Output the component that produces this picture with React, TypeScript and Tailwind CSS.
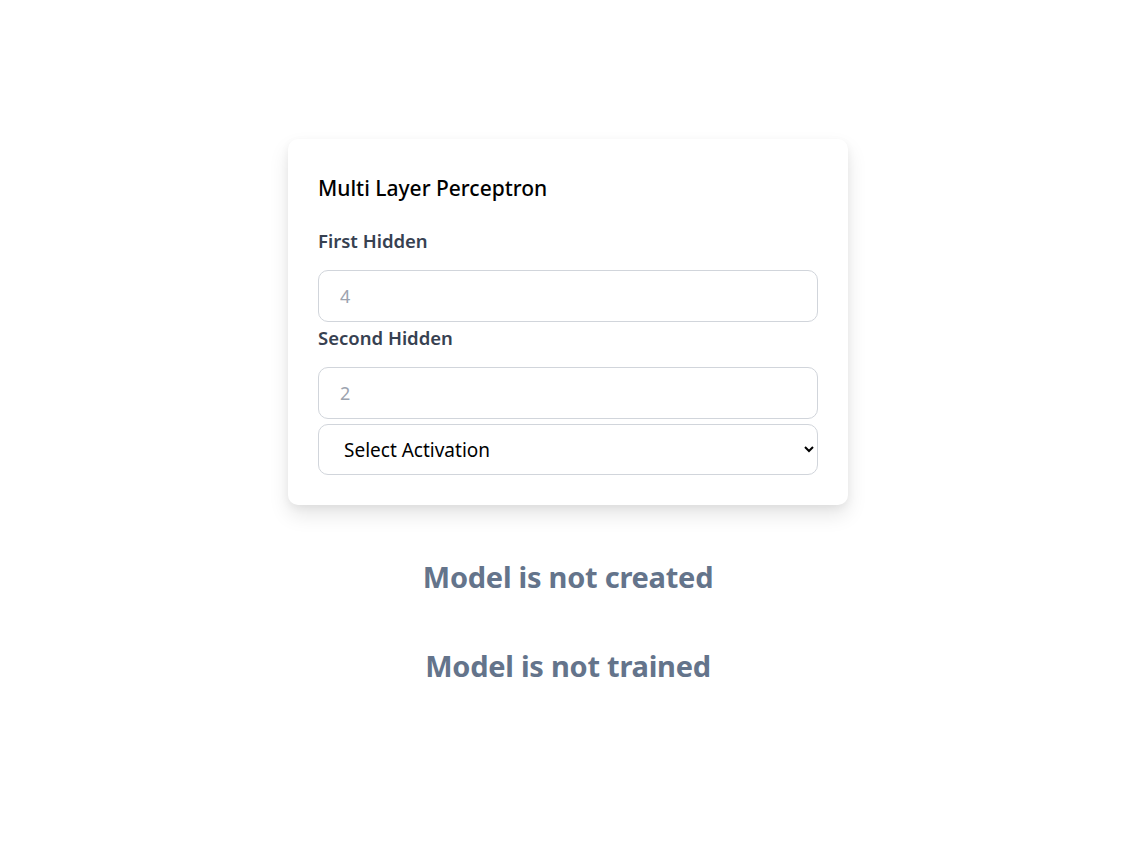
export default function App() {
  return (
    <div
      className="min-h-screen w-full bg-white flex flex-col items-center pr-[10px]"
      style={{ fontFamily: '"Segoe UI", "Noto Sans", "Open Sans", sans-serif' }}
    >
      <div className="mt-[139px] w-[560px] rounded-[10px] bg-white px-[30px] pt-[35px] pb-[30px] shadow-[0_10px_20px_rgba(0,0,0,0.10),0_3px_8px_rgba(0,0,0,0.05)]">
        <h2 className="text-[21px] leading-[28px] font-medium text-black mb-[25px]">Multi Layer Perceptron</h2>
        <label className="block text-[18.5px] leading-[28px] font-semibold text-[#374151] mb-[15px]">First Hidden</label>
        <input
          type="number"
          placeholder="4"
          className="block w-full h-[52px] rounded-[10px] border border-[#d1d5db] px-[21px] text-[18px] text-black placeholder:text-[#9ca3af] outline-none"
        />
        <label className="block mt-[2px] text-[18.5px] leading-[28px] font-semibold text-[#374151] mb-[15px]">Second Hidden</label>
        <input
          type="number"
          placeholder="2"
          className="block w-full h-[52px] rounded-[10px] border border-[#d1d5db] px-[21px] text-[18px] text-black placeholder:text-[#9ca3af] outline-none"
        />
        <select className="block mt-[5px] w-full h-[51px] rounded-[10px] border border-[#d1d5db] bg-white pl-[21px] pr-[8px] text-[19px] text-black outline-none">
          <option>Select Activation</option>
          <option>relu</option>
          <option>sigmoid</option>
          <option>tanh</option>
        </select>
      </div>
      <h2 className="mt-[54px] text-[29px] leading-[36px] font-bold tracking-[-0.25px] text-[#64748b]">Model is not created</h2>
      <h2 className="mt-[53px] text-[29px] leading-[36px] font-bold tracking-[-0.25px] text-[#64748b]">Model is not trained</h2>
    </div>
  );
}
